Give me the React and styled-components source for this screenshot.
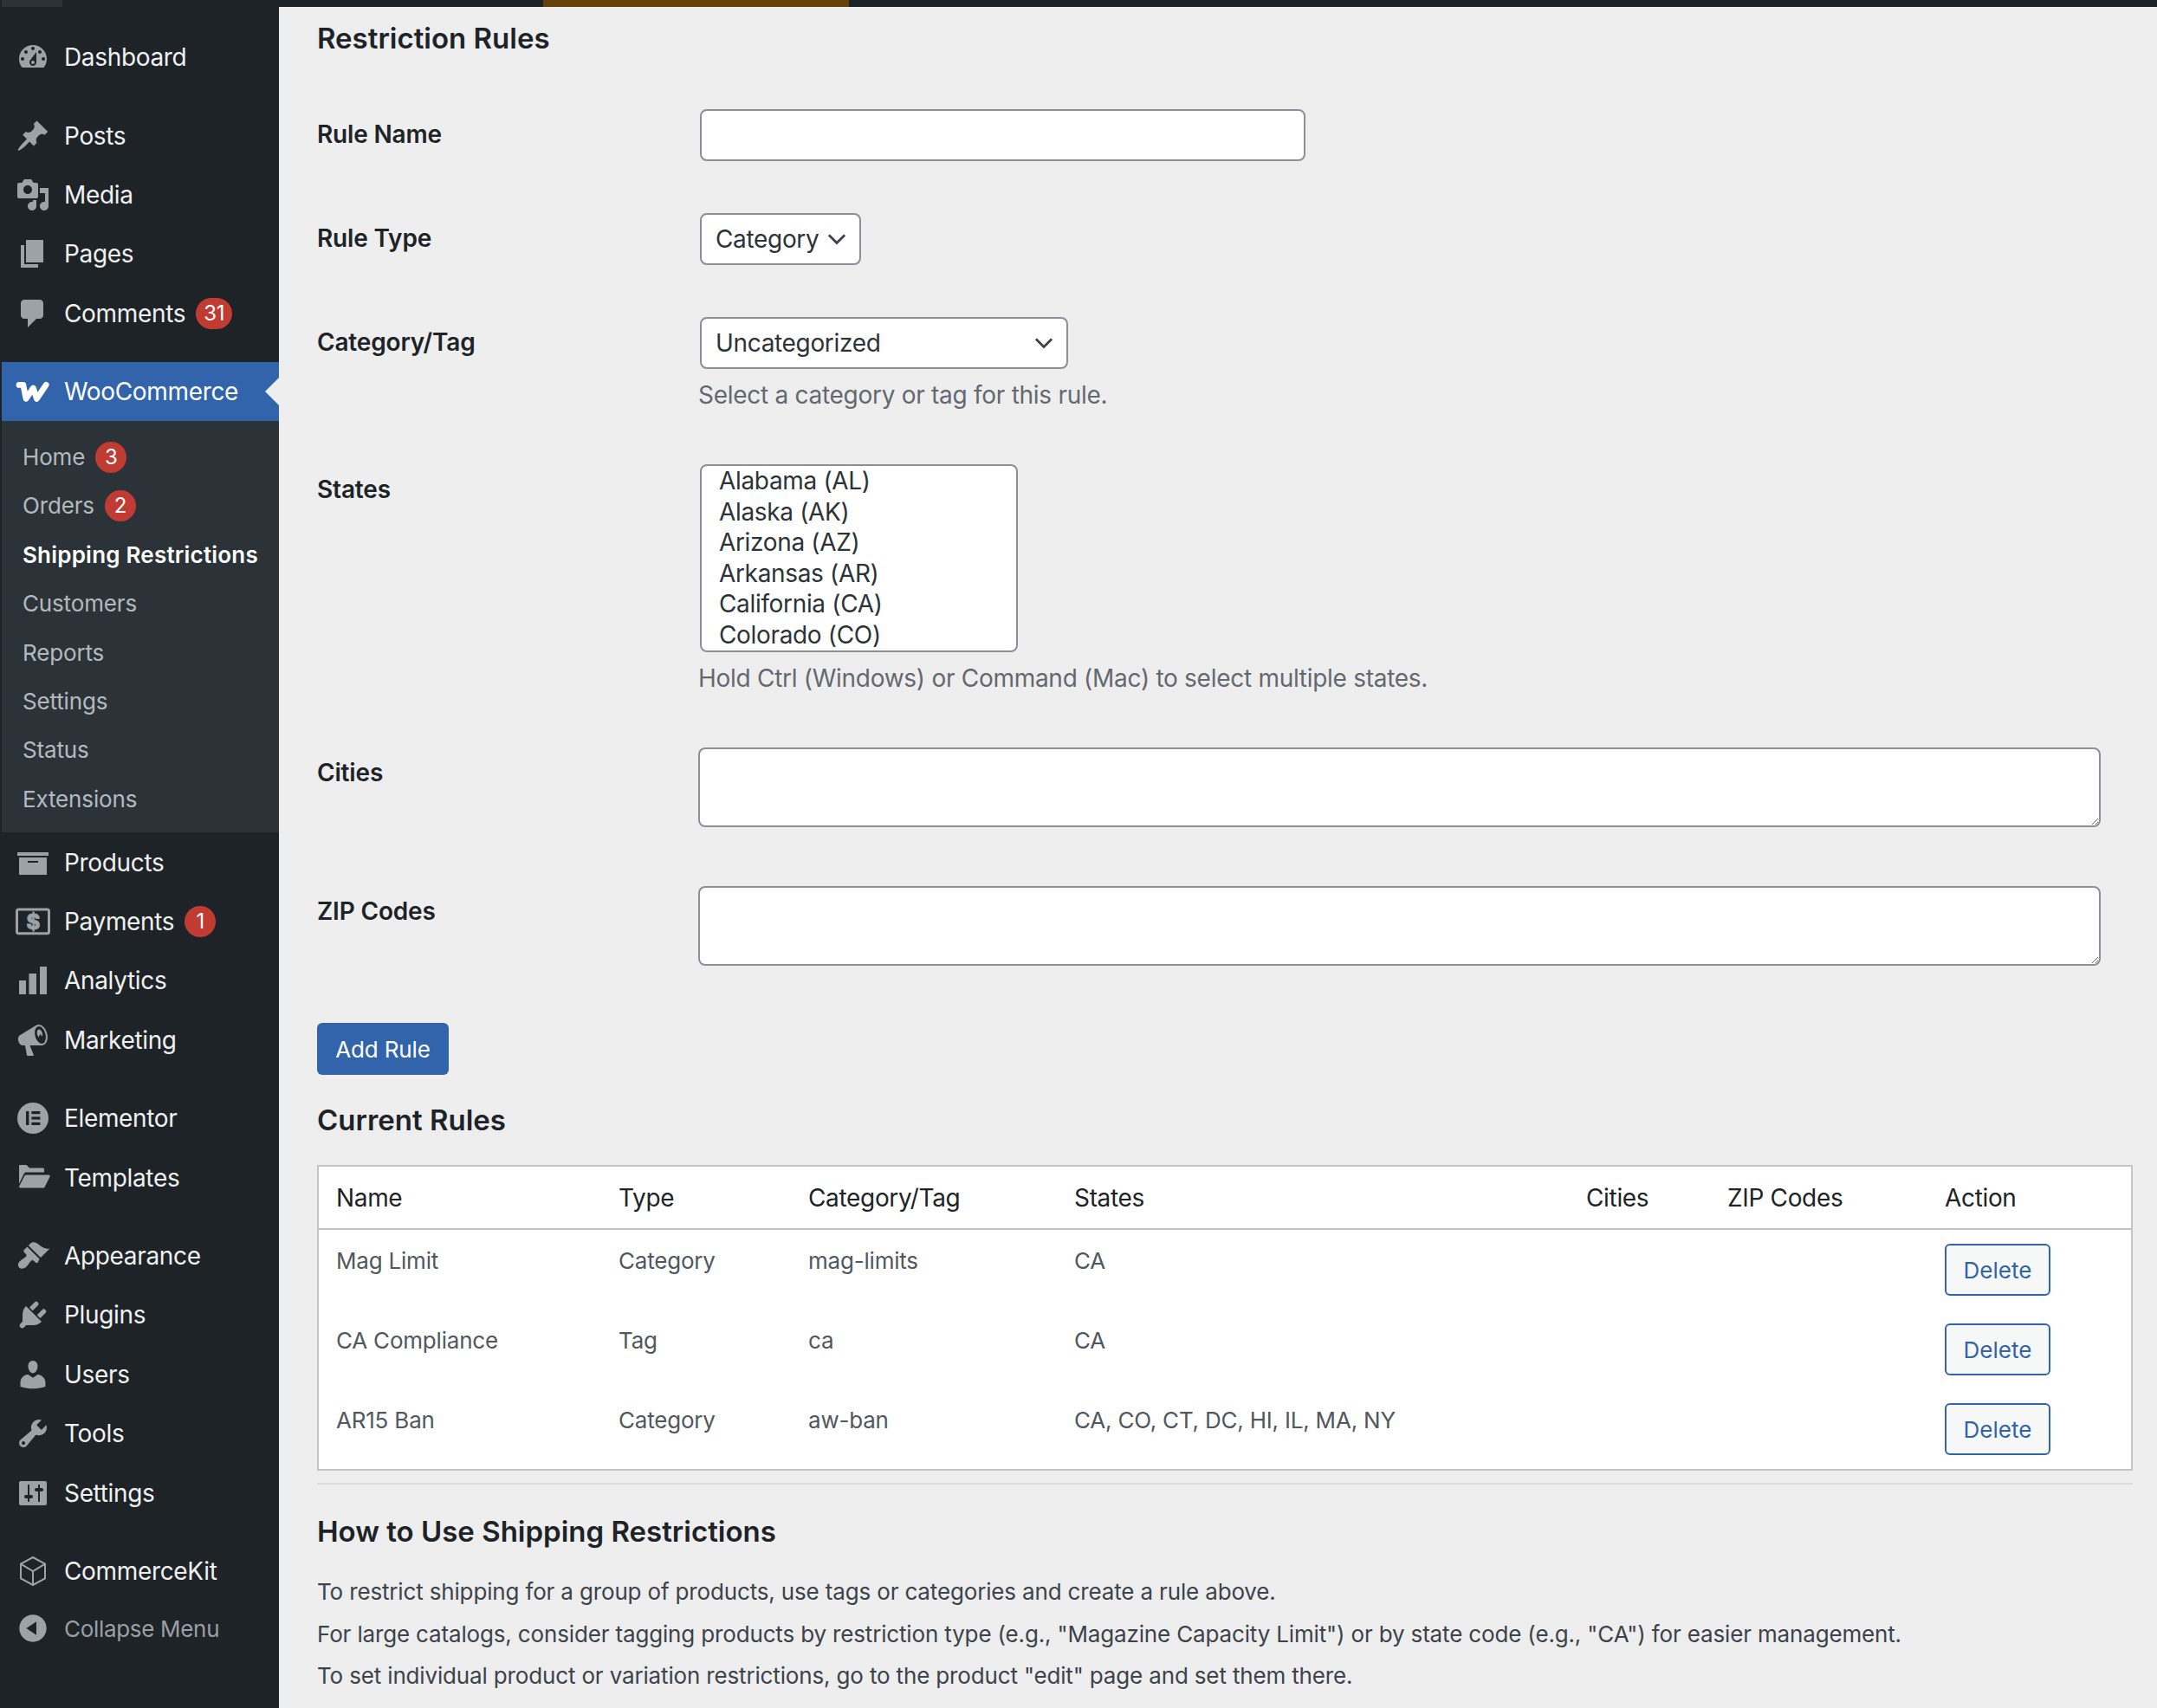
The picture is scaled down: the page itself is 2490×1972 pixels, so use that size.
import React from "react";
import styled, { createGlobalStyle } from "styled-components";

const GlobalStyle = createGlobalStyle`
  html, body {
    margin: 0;
    height: 100%;
    overflow: hidden;
    background: #eeeeef;
  }
  body {
    font-family: Inter, "Liberation Sans", sans-serif;
    font-size: 28px;
    color: #1d2327;
  }
`;

const chevron =
  "data:image/svg+xml;utf8,%3Csvg xmlns='http://www.w3.org/2000/svg' width='20' height='20'%3E%3Cpath d='M5 6l5 5 5-5 1.4 1-6.4 6.4L3.6 7z' fill='%233c434a'/%3E%3C/svg%3E";

const ICONS = {
  dashboard:
    "M3.76 16h12.48c1.1-1.37 1.76-3.11 1.76-5 0-4.42-3.58-8-8-8s-8 3.58-8 8c0 1.89.66 3.63 1.76 5zM10 4c.55 0 1 .45 1 1s-.45 1-1 1-1-.45-1-1 .45-1 1-1zM6 6c.55 0 1 .45 1 1s-.45 1-1 1-1-.45-1-1 .45-1 1-1zm8 0c.55 0 1 .45 1 1s-.45 1-1 1-1-.45-1-1 .45-1 1-1zm-5.37 5.55L12 7v6c0 1.1-.9 2-2 2s-2-.9-2-2c0-.57.24-1.08.63-1.45zM4 10c.55 0 1 .45 1 1s-.45 1-1 1-1-.45-1-1 .45-1 1-1zm12 0c.55 0 1 .45 1 1s-.45 1-1 1-1-.45-1-1 .45-1 1-1zm-5 3c0-.55-.45-1-1-1s-1 .45-1 1 .45 1 1 1 1-.45 1-1z",
  posts:
    "M10.44 3.02l1.82-1.82 6.36 6.35-1.83 1.82c-1.05-.68-2.48-.57-3.41.36l-.75.75c-.92.93-1.04 2.35-.35 3.41l-1.83 1.82-2.41-2.41-2.8 2.79c-.42.42-3.38 2.71-3.8 2.29s1.86-3.39 2.28-3.81l2.79-2.79L4.1 9.36l1.83-1.82c1.05.69 2.48.57 3.4-.36l.75-.75c.93-.92 1.05-2.35.36-3.41z",
  media:
    "M13 11V4c0-.55-.45-1-1-1h-1.67L9 1H5L3.67 3H2c-.55 0-1 .45-1 1v7c0 .55.45 1 1 1h10c.55 0 1-.45 1-1zM7 4.5c1.38 0 2.5 1.12 2.5 2.5S8.38 9.5 7 9.5 4.5 8.38 4.5 7 5.62 4.5 7 4.5zM14 6h5v10.5c0 1.38-1.12 2.5-2.5 2.5S14 17.88 14 16.5s1.12-2.5 2.5-2.5c.17 0 .34.02.5.05V9h-3V6zm-4 8.05V13h2v3.5c0 1.38-1.12 2.5-2.5 2.5S7 17.88 7 16.5 8.12 14 9.5 14c.17 0 .34.02.5.05z",
  pages: "M6 15V2h10v13H6zm-1 1h8v2H3V5h2v11z",
  comments:
    "M5 2h9c1.1 0 2 .9 2 2v7c0 1.1-.9 2-2 2h-2l-5 5v-5H5c-1.1 0-2-.9-2-2V4c0-1.1.9-2 2-2z",
  products: "M19 4v2H1V4h18zM2 7h16v10H2V7zm11 3V9H7v1h6z",
  analytics: "M2 10h4v8H2zM7.7 6h4.3v12H7.7zM14 2h4v16h-4z",
  marketing:
    "M18.15 5.94c.46 1.62.38 3.22-.02 4.48-.42 1.28-1.26 2.18-2.3 2.48-.16.06-.26.06-.4.06-.06.02-.12.02-.18.02-.06.02-.14.02-.22.02h-6.8l2.22 5.5c.02.14-.06.26-.14.34-.08.1-.24.16-.34.16H6.95c-.1 0-.26-.06-.34-.16-.08-.08-.16-.2-.14-.34l-1-5.5H4.25l-.02-.02c-.5.06-1.08-.18-1.54-.62s-.88-1.08-1.06-1.88c-.24-.8-.2-1.56-.02-2.2.18-.62.58-1.08 1.06-1.3l.02-.02 9-5.4c.1-.06.18-.1.24-.16.06-.04.14-.08.24-.12.16-.08.28-.12.5-.18 1.04-.3 2.24.1 3.22 1 .98.88 1.86 2.24 2.26 3.86zm-2.58 5.98h-.02c.4-.1.74-.34 1.04-.7.58-.7.86-1.76.86-3.04-.02-.64-.1-1.3-.28-1.98-.34-1.36-1.02-2.5-1.78-3.24s-1.68-1.1-2.46-.88c-.38.1-.72.34-1 .7-.58.7-.84 1.76-.84 3.04.02.64.08 1.3.26 1.98.36 1.34 1 2.48 1.82 3.24.78.74 1.62 1.08 2.4.88zm-.92-4.5c.26-.06.54 0 .78.18.1-.24.12-.52.14-.8 0-.3-.04-.64-.12-.98-.18-.66-.54-1.2-.94-1.6-.4-.36-.84-.52-1.2-.44-.38.1-.66.48-.84 1-.16.52-.2 1.2-.02 1.88.18.7.52 1.24.94 1.64.06.06.12.1.18.14-.06-.26-.04-.54.06-.8.16-.56.58-1.02 1.02-1.22z",
  templates:
    "M2 3.2c0-.4.3-.7.7-.7h3.6L8 4.3h7.8c.4 0 .7.3.7.7v1.7H6.2c-.6 0-1 .3-1.3.8L2 13.4V3.2zM6 8.2h13.2c.5 0 .8.5.6 1l-3 6c-.2.4-.5.6-1 .6H2.7c-.5 0-.8-.5-.6-1l3-5.9c.2-.4.5-.7.9-.7z",
  appearance:
    "M14.48 11.06L7.41 3.99l1.5-1.5c.5-.56 2.3-.47 3.51.32 1.21.8 1.43 1.28 2.91 2.1 1.18.64 2.45 1.26 4.45.85zm-.71.71L6.7 4.7 4.93 6.47c-.39.39-.39 1.02 0 1.41l1.06 1.06c.39.39.39 1.03 0 1.42-.6.6-1.43 1.11-2.21 1.69-.35.26-.7.53-1.01.84C1.43 13.71.98 15.6 2.1 16.7s2.99.65 4.37-.75c.3-.31.58-.66.84-1.01.58-.78 1.09-1.61 1.69-2.21.39-.39 1.03-.39 1.42 0l1.06 1.06c.39.39 1.02.39 1.41 0z",
  plugins:
    "M13.11 4.36L9.87 7.6 8 5.73l3.24-3.24c.35-.34 1.05-.2 1.56.32.52.51.66 1.21.31 1.55zm-8 1.77l.91-1.12 9.01 9.01-1.19.84c-.71.71-2.63 1.16-3.82 1.16H6.14L4.9 17.26c-.59.59-1.54.59-2.12 0-.59-.58-.59-1.53 0-2.12l1.24-1.24v-3.88c0-1.13.4-3.19 1.09-3.89zm7.26 3.97l3.24-3.24c.34-.35 1.04-.21 1.55.31.52.51.66 1.21.31 1.55l-3.24 3.25z",
  users:
    "M10 9.25c-2.27 0-2.73-3.44-2.73-3.44C7 4.02 7.82 2 9.97 2c2.16 0 2.98 2.02 2.71 3.81 0 0-.41 3.44-2.68 3.44zm0 2.57L12.72 10c2.39 0 4.52 2.33 4.52 4.53v2.49s-3.65 1.13-7.24 1.13c-3.65 0-7.24-1.13-7.24-1.13v-2.49c0-2.25 1.94-4.48 4.47-4.48z",
  tools:
    "M16.68 9.77c-1.34 1.34-3.3 1.67-4.95.99l-5.41 6.52c-.99.99-2.59.99-3.58 0s-.99-2.59 0-3.57l6.52-5.42c-.68-1.65-.35-3.61.99-4.95 1.28-1.28 3.12-1.62 4.72-1.06l-2.89 2.89 2.82 2.82 2.86-2.87c.53 1.58.18 3.39-1.08 4.65zM3.81 16.21c.4.39 1.04.39 1.43 0 .4-.4.4-1.04 0-1.43-.39-.4-1.03-.4-1.43 0-.39.39-.39 1.03 0 1.43z",
  settings:
    "M18 16V4c0-.55-.45-1-1-1H3c-.55 0-1 .45-1 1v12c0 .55.45 1 1 1h14c.55 0 1-.45 1-1zM8 11h1c.55 0 1 .45 1 1s-.45 1-1 1H8v1.5c0 .28-.22.5-.5.5s-.5-.22-.5-.5V13H6c-.55 0-1-.45-1-1s.45-1 1-1h1V5.5c0-.28.22-.5.5-.5s.5.22.5.5V11zm5-2h-1c-.55 0-1-.45-1-1s.45-1 1-1h1V5.5c0-.28.22-.5.5-.5s.5.22.5.5V7h1c.55 0 1 .45 1 1s-.45 1-1 1h-1v5.5c0 .28-.22.5-.5.5s-.5-.22-.5-.5V9z",
  collapse:
    "M10 2.16c4.33 0 7.84 3.51 7.84 7.84s-3.51 7.84-7.84 7.84S2.16 14.33 2.16 10 5.71 2.16 10 2.16zm2 11.72V6.12L6.18 9.97z",
};

const Icon = ({ name }) => (
  <IconSvg viewBox="0 0 20 20">
    {name === "woo" && <WooMark d="M2 6.2H4.4L6 14.2L10.2 8L12.2 14.2L17.6 6.2" />}
    {name === "payments" && (
      <>
        <rect x=".75" y="3" width="18.5" height="13.9" rx="1" fill="none" stroke="currentColor" strokeWidth="1.5" />
        <text x="10" y="14.3" textAnchor="middle" fontSize="12" fontWeight="800" fill="currentColor" stroke="currentColor" strokeWidth=".4">$</text>
      </>
    )}
    {name === "elementor" && (
      <>
        <circle cx="10" cy="10" r="9" fill="currentColor" />
        <rect x="6" y="6" width="1.7" height="8" fill="#1d2327" />
        <rect x="9.2" y="6" width="5" height="1.6" fill="#1d2327" />
        <rect x="9.2" y="9.2" width="5" height="1.6" fill="#1d2327" />
        <rect x="9.2" y="12.4" width="5" height="1.6" fill="#1d2327" />
      </>
    )}
    {name === "kit" && (
      <path
        d="M10 2l7 3.8v8.4L10 18l-7-3.8V5.8zM3 5.8L10 10l7-4.2M10 10v8"
        fill="none"
        stroke="currentColor"
        strokeWidth="1"
      />
    )}
    {ICONS[name] && <path d={ICONS[name]} fillRule="evenodd" fill="currentColor" />}
  </IconSvg>
);

const MENU_TOP = [
  { label: "Dashboard", icon: "dashboard" },
  { label: "Posts", icon: "posts", gap: true },
  { label: "Media", icon: "media" },
  { label: "Pages", icon: "pages" },
  { label: "Comments", icon: "comments", badge: "31" },
];

const SUBMENU = [
  { label: "Home", badge: "3" },
  { label: "Orders", badge: "2" },
  { label: "Shipping Restrictions", current: true },
  { label: "Customers" },
  { label: "Reports" },
  { label: "Settings" },
  { label: "Status" },
  { label: "Extensions" },
];

const MENU_BOTTOM = [
  { label: "Products", icon: "products" },
  { label: "Payments", icon: "payments", badge: "1" },
  { label: "Analytics", icon: "analytics" },
  { label: "Marketing", icon: "marketing" },
  { label: "Elementor", icon: "elementor", gap: true },
  { label: "Templates", icon: "templates" },
  { label: "Appearance", icon: "appearance", gap: true },
  { label: "Plugins", icon: "plugins" },
  { label: "Users", icon: "users" },
  { label: "Tools", icon: "tools" },
  { label: "Settings", icon: "settings" },
  { label: "CommerceKit", icon: "kit", gap: true },
];

const STATES = [
  "Alabama (AL)",
  "Alaska (AK)",
  "Arizona (AZ)",
  "Arkansas (AR)",
  "California (CA)",
  "Colorado (CO)",
];

const RULES = [
  { name: "Mag Limit", type: "Category", term: "mag-limits", states: "CA" },
  { name: "CA Compliance", type: "Tag", term: "ca", states: "CA" },
  { name: "AR15 Ban", type: "Category", term: "aw-ban", states: "CA, CO, CT, DC, HI, IL, MA, NY" },
];

const COLUMNS = [
  { label: "Name", width: 326 },
  { label: "Type", width: 219 },
  { label: "Category/Tag", width: 307 },
  { label: "States", width: 591 },
  { label: "Cities", width: 163 },
  { label: "ZIP Codes", width: 251 },
  { label: "Action", width: 235 },
];

const MenuRow = ({ item }) => (
  <MenuItem $gap={item.gap}>
    <Icon name={item.icon} />
    <span>{item.label}</span>
    {item.badge && <Badge>{item.badge}</Badge>}
  </MenuItem>
);

export default function App() {
  return (
    <>
      <GlobalStyle />
      <Page>
        <TopBar>
          <TopTab $width={70} $left={2} $color="#2c3338" />
          <TopTab $width={353} $left={555} $color="#66410a" />
        </TopBar>
        <Body>
          <Sidebar>
            {MENU_TOP.map((item) => (
              <MenuRow key={item.label} item={item} />
            ))}
            <ActiveItem>
              <Icon name="woo" />
              <span>WooCommerce</span>
            </ActiveItem>
            <Submenu>
              {SUBMENU.map((item) => (
                <SubItem key={item.label} $current={item.current}>
                  <span>{item.label}</span>
                  {item.badge && <Badge>{item.badge}</Badge>}
                </SubItem>
              ))}
            </Submenu>
            {MENU_BOTTOM.map((item) => (
              <MenuRow key={item.label} item={item} />
            ))}
            <CollapseRow>
              <Icon name="collapse" />
              <span>Collapse Menu</span>
            </CollapseRow>
          </Sidebar>
          <Main>
            <Heading>Restriction Rules</Heading>
            <FormRow>
              <Label>Rule Name</Label>
              <div>
                <TextInput type="text" />
              </div>
            </FormRow>
            <FormRow>
              <Label>Rule Type</Label>
              <div>
                <Select $width={186} defaultValue="Category">
                  <option>Category</option>
                  <option>Tag</option>
                </Select>
              </div>
            </FormRow>
            <FormRow>
              <Label>Category/Tag</Label>
              <div>
                <Select $width={425} defaultValue="Uncategorized">
                  <option>Uncategorized</option>
                </Select>
                <Hint>Select a category or tag for this rule.</Hint>
              </div>
            </FormRow>
            <FormRow>
              <Label>States</Label>
              <div>
                <StateList multiple>
                  {STATES.map((state) => (
                    <option key={state}>{state}</option>
                  ))}
                </StateList>
                <Hint>Hold Ctrl (Windows) or Command (Mac) to select multiple states.</Hint>
              </div>
            </FormRow>
            <FormRow>
              <Label>Cities</Label>
              <div>
                <TextArea />
              </div>
            </FormRow>
            <FormRow>
              <Label>ZIP Codes</Label>
              <div>
                <TextArea />
              </div>
            </FormRow>
            <PrimaryButton>Add Rule</PrimaryButton>
            <SectionHeading>Current Rules</SectionHeading>
            <RulesTable>
              <thead>
                <tr>
                  {COLUMNS.map((col) => (
                    <HeadCell key={col.label} $width={col.width}>
                      {col.label}
                    </HeadCell>
                  ))}
                </tr>
              </thead>
              <tbody>
                {RULES.map((rule) => (
                  <tr key={rule.name}>
                    <Cell>{rule.name}</Cell>
                    <Cell>{rule.type}</Cell>
                    <Cell>{rule.term}</Cell>
                    <Cell>{rule.states}</Cell>
                    <Cell />
                    <Cell />
                    <Cell>
                      <DeleteButton>Delete</DeleteButton>
                    </Cell>
                  </tr>
                ))}
              </tbody>
            </RulesTable>
            <Divider />
            <SectionHeading $help>How to Use Shipping Restrictions</SectionHeading>
            <HelpText>To restrict shipping for a group of products, use tags or categories and create a rule above.</HelpText>
            <HelpText>For large catalogs, consider tagging products by restriction type (e.g., "Magazine Capacity Limit") or by state code (e.g., "CA") for easier management.</HelpText>
            <HelpText>To set individual product or variation restrictions, go to the product "edit" page and set them there.</HelpText>
          </Main>
        </Body>
      </Page>
    </>
  );
}

const Page = styled.div`
  display: flex;
  flex-direction: column;
  height: 1972px;
  overflow: hidden;
`;

const TopBar = styled.div`
  display: flex;
  flex: none;
  height: 8px;
  background: #1d2327;
`;

const TopTab = styled.div`
  width: ${({ $width }) => $width}px;
  margin-left: ${({ $left }) => $left}px;
  background: ${({ $color }) => $color};
`;

const Body = styled.div`
  display: flex;
  flex: 1;
`;

const Sidebar = styled.nav`
  flex: none;
  box-sizing: border-box;
  width: 322px;
  padding: 24px 0 0 2px;
  background: #1d2327;
  color: #f0f0f1;
`;

const IconSvg = styled.svg`
  flex: none;
  width: 40px;
  height: 40px;
  margin-right: 16px;
  color: #9ca2a7;
`;

const WooMark = styled.path`
  fill: none;
  stroke: #fff;
  stroke-width: 3.4;
  stroke-linecap: round;
  stroke-linejoin: round;
`;

const MenuItem = styled.div`
  display: flex;
  align-items: center;
  height: 68.4px;
  margin-top: ${({ $gap }) => ($gap ? "22px" : "0")};
  padding-left: 16px;
  font-size: 28px;
  letter-spacing: -0.012em;
  color: #f0f0f1;
`;

const ActiveItem = styled(MenuItem)`
  position: relative;
  margin-top: 22px;
  background: #3264ab;
  color: #fff;

  ${IconSvg} {
    color: #fff;
  }

  &::after {
    content: "";
    position: absolute;
    right: 0;
    top: 18px;
    border: 16px solid transparent;
    border-right-color: #eeeeef;
    border-left-width: 0;
  }
`;

const Submenu = styled.div`
  padding: 13px 0 11px;
  background: #2c3338;
`;

const SubItem = styled.div`
  display: flex;
  align-items: center;
  height: 56.4px;
  padding-left: 24px;
  font-size: 26px;
  font-weight: ${({ $current }) => ($current ? 600 : 400)};
  letter-spacing: ${({ $current }) => ($current ? "0.008em" : "-0.006em")};
  color: ${({ $current }) => ($current ? "#fff" : "rgba(240, 246, 252, 0.7)")};
`;

const CollapseRow = styled(MenuItem)`
  height: 64.4px;
  font-size: 26px;
  color: #9a9fa5;
`;

const Badge = styled.span`
  display: inline-block;
  box-sizing: border-box;
  min-width: 36px;
  height: 36px;
  margin-left: 12px;
  padding: 0 9px;
  border-radius: 18px;
  background: #c03c32;
  color: #fff;
  font-size: 24px;
  font-weight: 400;
  line-height: 36px;
  text-align: center;
`;

const Main = styled.main`
  flex: 1;
  min-width: 0;
  padding: 14px 28px 0 44px;
`;

const Heading = styled.h2`
  margin: 0 0 30px;
  font-size: 33px;
  font-weight: 600;
  line-height: 44px;
  color: #1d2327;
`;

const SectionHeading = styled(Heading)`
  margin: ${({ $help }) => ($help ? "32px 0 28px" : "30px 0 30px")};
`;

const FormRow = styled.div`
  display: grid;
  grid-template-columns: 440px 1fr;
  padding: 30px 37px 30px 0;
`;

const Label = styled.label`
  font-size: 28px;
  font-weight: 600;
  line-height: 58px;
  letter-spacing: -0.006em;
`;

const controlBase = `
  box-sizing: border-box;
  display: block;
  border: 2px solid #8c8f94;
  border-radius: 8px;
  background-color: #fff;
  font-family: inherit;
  font-size: 28px;
  letter-spacing: -0.012em;
  color: #2c3338;
`;

const TextInput = styled.input`
  ${controlBase}
  width: 699px;
  height: 60px;
  margin-left: 2px;
`;

const Select = styled.select`
  ${controlBase}
  appearance: none;
  width: ${({ $width }) => $width}px;
  height: 60px;
  margin-left: 2px;
  padding: 0 32px 0 16px;
  background-image: url("${chevron}");
  background-repeat: no-repeat;
  background-position: right 10px top 55%;
  background-size: 32px 32px;
`;

const StateList = styled.select`
  ${controlBase}
  width: 367px;
  height: 217px;
  margin-left: 2px;
  padding: 0 2px;
  overflow: hidden;
  scrollbar-width: none;

  option {
    min-height: 0;
    height: 35.6px;
    padding: 0 18px;
    line-height: 35.6px;
  }
`;

const TextArea = styled.textarea`
  ${controlBase}
  width: 100%;
  height: 92px;
  margin-bottom: 8px;
`;

const Hint = styled.p`
  margin: 10px 0 0;
  font-size: 28px;
  line-height: 40px;
  letter-spacing: -0.01em;
  color: #646970;
`;

const PrimaryButton = styled.button`
  display: block;
  box-sizing: border-box;
  width: 152px;
  height: 60px;
  margin-top: 28px;
  border: 0;
  border-radius: 6px;
  background: #3264ab;
  color: #fff;
  font-family: inherit;
  font-size: 26px;
  letter-spacing: -0.006em;
`;

const RulesTable = styled.table`
  box-sizing: border-box;
  width: 2096px;
  table-layout: fixed;
  border: 2px solid #c3c4c7;
  border-spacing: 0;
  background: #fff;

  tbody tr:last-child td {
    padding-bottom: 16px;
  }
`;

const HeadCell = styled.th`
  box-sizing: border-box;
  width: ${({ $width }) => $width}px;
  height: 73px;
  padding: 0 20px;
  border-bottom: 2px solid #c3c4c7;
  font-size: 28px;
  font-weight: 400;
  letter-spacing: -0.012em;
  text-align: left;
  color: #1d2327;
`;

const Cell = styled.td`
  padding: 16px 20px 16px;
  font-size: 26px;
  line-height: 40px;
  letter-spacing: -0.008em;
  vertical-align: top;
  color: #50575e;
`;

const DeleteButton = styled.button`
  display: block;
  box-sizing: border-box;
  width: 122px;
  height: 60px;
  border: 2px solid #3264ab;
  border-radius: 6px;
  background: #f6f7f7;
  color: #3264ab;
  font-family: inherit;
  font-size: 26px;
`;

const Divider = styled.hr`
  height: 2px;
  margin: 14px 0 0;
  border: 0;
  background: #dcdcde;
`;

const HelpText = styled.p`
  margin: 0 0 8.5px;
  font-size: 26px;
  line-height: 40px;
  letter-spacing: -0.006em;
  color: #3c434a;
`;
